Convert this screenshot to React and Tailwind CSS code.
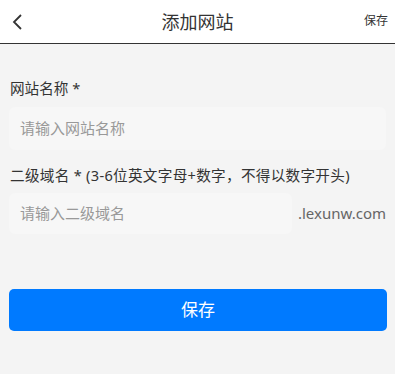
export default function App() {
  return (
    <div
      className="h-[374px] w-[395px] bg-[#f4f4f4] text-[#333]"
      style={{ fontFamily: '"Noto Sans", "Noto Sans CJK SC", sans-serif' }}
    >
      <header className="relative flex h-[44px] items-center justify-center border-b border-[#333] bg-white">
        <button className="absolute left-[11px] top-[13px] text-[#333]" type="button">
          <svg width="14" height="18" viewBox="0 0 14 18" fill="none">
            <path d="M10 2 L3 9 L10 16" stroke="#333" strokeWidth="1.8" />
          </svg>
        </button>
        <h1 className="text-[18px] leading-none text-[#333]">添加网站</h1>
        <button className="absolute right-[7px] top-[15px] text-[12px] leading-none text-[#333]" type="button">
          保存
        </button>
      </header>

      <div className="px-[9px]">
        <label className="mt-[35px] block pl-[1px] text-[14.6px] leading-[18px]">网站名称 *</label>
        <div className="mt-[10px] flex h-[43px] items-center rounded-[6px] bg-[#f7f7f7] pl-[11px] text-[15px] text-[#999]">
          请输入网站名称
        </div>

        <label className="mt-[16px] block pl-[1px] text-[14.6px] leading-[18px] tracking-[0.3px]">
          二级域名 * (3-6位英文字母+数字，不得以数字开头)
        </label>
        <div className="mt-[9px] flex items-center">
          <div className="flex h-[41px] w-[284px] items-center rounded-[6px] bg-[#f7f7f7] pl-[11px] text-[15px] text-[#999]">
            请输入二级域名
          </div>
          <span className="ml-[6px] text-[15px] text-[#666]">.lexunw.com</span>
        </div>

        <button
          className="mt-[55px] flex h-[42px] w-[378px] items-center justify-center rounded-[5px] bg-[#007aff] text-[17px] text-white"
          type="button"
        >
          保存
        </button>
      </div>
    </div>
  );
}
